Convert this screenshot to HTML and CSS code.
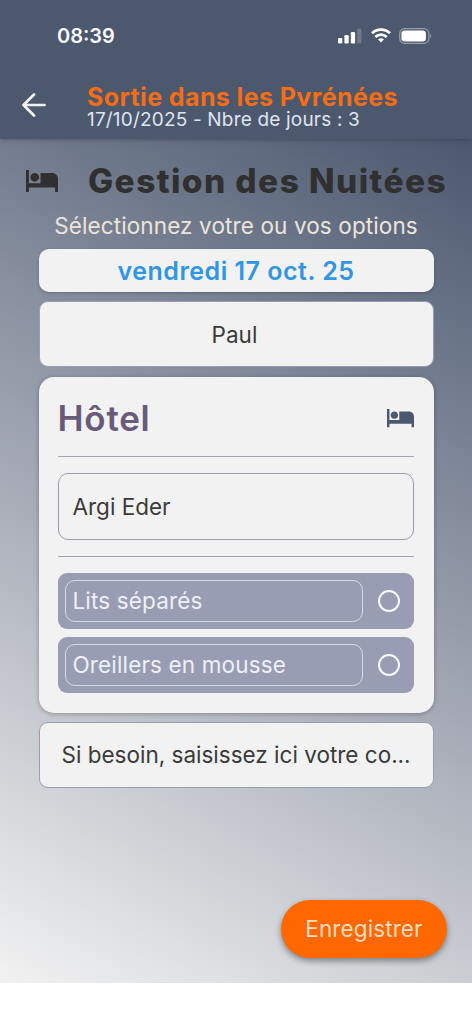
FILE: index.html
```html
<!DOCTYPE html>
<html lang="fr">
<head>
<meta charset="utf-8">
<title>Gestion des Nuitées</title>
<link rel="stylesheet" href="styles.css">
</head>
<body>
<svg width="0" height="0" class="defs" aria-hidden="true">
  <symbol id="bed" viewBox="1 5 22 15" preserveAspectRatio="none">
    <path d="M7 13c1.66 0 3-1.34 3-3S8.660 7 7 7s-3 1.340-3 3 1.340 3 3 3zM19 7h-8v7H3V5H1v15h2v-3h18v3h2v-9c0-2.210-1.790-4-4-4z"/>
  </symbol>
</svg>
<div class="screen">
  <header class="appbar">
    <div class="status">
      <span class="time">08:39</span>
      <div class="indicators">
        <svg class="signal" width="24" height="16" viewBox="0 0 24 16" fill="#fff">
          <rect x="0" y="10" width="4.300" height="5.500" rx="1.200"/>
          <rect x="6.400" y="7" width="4.300" height="8.500" rx="1.200"/>
          <rect x="12.800" y="4" width="4.300" height="11.500" rx="1.200"/>
          <rect x="19.200" y="0.500" width="4.300" height="15" rx="1.200" opacity=".2"/>
        </svg>
        <svg class="wifi" width="20" height="15" viewBox="0 0 20 15" fill="none" stroke="#fff" stroke-width="2.700">
          <path d="M1 5.300C6 .500 14 .500 19 5.300"/>
          <path d="M4.300 8.900C7.500 5.900 12.500 5.900 15.700 8.900"/>
          <path d="M7 11.300Q10 9.200 13 11.300L10 14.500Z" fill="#fff" stroke="none"/>
        </svg>
        <svg class="battery" width="34" height="16" viewBox="0 0 34 16">
          <rect x=".7" y=".7" width="29.200" height="14.600" rx="4.800" fill="none" stroke="#fff" stroke-opacity=".42" stroke-width="1.200"/>
          <rect x="2.400" y="2.500" width="24.500" height="11" rx="3.300" fill="#fff"/>
          <path d="M31.300 5.800q1.900 2.200 0 4.400z" fill="#fff" fill-opacity=".5"/>
        </svg>
      </div>
    </div>
    <div class="bar">
      <svg class="back" width="24" height="24" viewBox="0 0 24 24" fill="none" stroke="#f2f2f2" stroke-width="2.700" stroke-linecap="round" stroke-linejoin="round">
        <path d="M22.500 12H1.500M12 1.500L1.500 12L12 22.500"/>
      </svg>
      <div class="titles">
        <div class="title">Sortie dans les Pyrénées</div>
        <div class="subtitle">17/10/2025 - Nbre de jours : 3</div>
      </div>
    </div>
  </header>
  <main class="content">
    <div class="heading">
      <svg class="heading-icon" width="32" height="22"><use href="#bed"/></svg>
      <h1>Gestion des Nuitées</h1>
    </div>
    <p class="hint">Sélectionnez votre ou vos options</p>
    <div class="stack">
      <div class="date">vendredi 17 oct. 25</div>
      <div class="box person">Paul</div>
      <section class="card">
        <div class="card-head">
          <h2>Hôtel</h2>
          <svg class="card-icon" width="27" height="18.500"><use href="#bed"/></svg>
        </div>
        <div class="rule"></div>
        <div class="field">Argi Eder</div>
        <div class="rule"></div>
        <div class="option first"><div class="label">Lits séparés</div><i class="radio"></i></div>
        <div class="option"><div class="label">Oreillers en mousse</div><i class="radio"></i></div>
      </section>
      <div class="box comment">Si besoin, saisissez ici votre co...</div>
    </div>
    <button class="save">Enregistrer</button>
  </main>
</div>
</body>
</html>
```
FILE: styles.css
```css
* { box-sizing: border-box; }
body { margin: 0; background: #fff; font-family: Inter, sans-serif; font-size: 22.5px; color: #3a3a3a; }
h1, h2, p { margin: 0; }
.defs { position: absolute; }
svg { display: block; flex: none; }
.screen { width: 472px; height: 1024px; display: flex; flex-direction: column; overflow: hidden; }
.appbar { position: relative; height: 139px; flex: none; background: #4c586e; box-shadow: 0 1px 4px rgba(0,0,0,.25); white-space: nowrap; }
.status { height: 71px; padding: 0 39px 0 57px; display: flex; align-items: center; justify-content: space-between; }
.time { font-size: 20px; font-weight: 600; color: #f8faff; }
.indicators { display: flex; align-items: center; }
.wifi { margin-left: 9px; }
.battery { margin-left: 8px; }
.bar { height: 68px; display: flex; align-items: center; padding-left: 22px; }
.titles { margin-left: 41px; height: 47px; }
.title { height: 24px; overflow: hidden; line-height: 31px; font-size: 25px; font-weight: 700; letter-spacing: .39px; color: #f66d13; }
.subtitle { line-height: 20px; margin-top: 4px; font-size: 19px; letter-spacing: .18px; color: #dfe5f0; }
.content { height: 844px; display: flex; flex-direction: column; align-items: center; background: linear-gradient(209.2deg, #4c5870, #f2f2f2); }
.heading { align-self: stretch; height: 58px; margin-top: 13px; padding-left: 26px; display: flex; align-items: center; }
.heading-icon { fill: #303030; }
h1 { margin-left: 30px; font-size: 33.5px; font-weight: 800; line-height: 60px; letter-spacing: 1.4px; color: #303030; white-space: nowrap; }
.hint { line-height: 31px; height: 30px; letter-spacing: .12px; color: #ede5da; white-space: nowrap; }
.stack { width: 395px; display: flex; flex-direction: column; }
.date { height: 43px; margin-top: 9px; border-radius: 10px; background: #f2f2f2; display: flex; align-items: center; justify-content: center; font-size: 25px; font-weight: 600; letter-spacing: .5px; color: #2f95e8; box-shadow: 0 1px 3px rgba(0,0,0,.25); }
.box { height: 66px; border: 1px solid #999db3; border-radius: 9px; background: #f2f2f2; display: flex; align-items: center; white-space: nowrap; }
.person { margin-top: 9px; padding-right: 3px; justify-content: center; }
.card { height: 336px; margin-top: 10px; padding: 0 20px 0 19px; border-radius: 15px; background: #f2f2f2; box-shadow: 0 1px 5px rgba(0,0,0,.28); display: flex; flex-direction: column; }
.card-head { height: 79px; padding-top: 4px; display: flex; align-items: center; justify-content: space-between; }
h2 { font-size: 35px; font-weight: 600; letter-spacing: .75px; line-height: 42px; padding-bottom: 1px; color: #695a79; }
.card-icon { fill: #4c586e; }
.rule { height: 1px; background: #a0a4b5; }
.field { height: 67px; margin: 16px 0; padding: 0 14px; border: 1px solid #999db3; border-radius: 10px; display: flex; align-items: center; }
.option { height: 56px; margin-top: 8px; padding: 0 14px 0 7px; border-radius: 9px; background: #999db3; display: flex; align-items: center; justify-content: space-between; color: #eef0f8; letter-spacing: .15px; }
.option.first { margin-top: 16px; }
.label { width: 298px; height: 42px; padding: 0 0 1px 7px; border: 1px solid #d5daea; border-radius: 10px; display: flex; align-items: center; }
.radio { width: 22px; height: 22px; border: 2.5px solid #f8f9ff; border-radius: 50%; }
.comment { margin-top: 9px; padding: 0 0 1px 22px; }
.save { align-self: flex-end; margin: 112px 25px 0 0; width: 166px; height: 58px; padding: 0 0 1px; border: 0; border-radius: 29px; background: #ff6700; color: #fadcc0; font: 22.5px Inter, sans-serif; letter-spacing: .1px; box-shadow: 0 3px 6px rgba(0,0,0,.4); }
```
